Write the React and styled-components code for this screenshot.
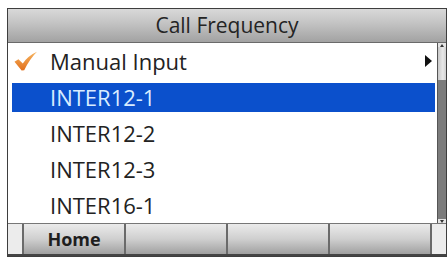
import React from "react";
import styled, { createGlobalStyle } from "styled-components";

const Global = createGlobalStyle`
  html, body { margin: 0; padding: 0; background: #ffffff; }
  body { font-family: "Open Sans", "DejaVu Sans", sans-serif; }
`;

const Screen = styled.div`
  box-sizing: border-box;
  margin: 8px 0 0 7px;
  width: 440px;
  height: 249px;
  border: 1px solid #3e3e3e;
  display: flex;
  flex-direction: column;
  background: #fff;
`;

const Header = styled.div`
  box-sizing: border-box;
  height: 34px;
  flex: none;
  display: flex;
  align-items: center;
  justify-content: center;
  padding-bottom: 1px;
  background: linear-gradient(#d9d9d9 0%, #c2c2c2 45%, #a2a2a2 100%);
  border-bottom: 1px solid #6a6a6a;
  font-size: 21px;
  font-weight: 500;
  color: #242424;
`;

const Body = styled.div`
  flex: none;
  height: 180px;
  display: flex;
`;

const List = styled.div`
  flex: 1;
  display: flex;
  flex-direction: column;
`;

const Row = styled.div`
  box-sizing: border-box;
  height: 36px;
  padding: 4px 2px 3px 4px;
  display: flex;
`;

const Item = styled.div`
  flex: 1;
  display: grid;
  grid-template-columns: 38px 1fr auto;
  align-items: center;
  padding-bottom: 2px;
  background: ${(p) => (p.$selected ? "#0b50cc" : "transparent")};
  color: ${(p) => (p.$selected ? "#d8ecff" : "#222")};
  font-size: 22px;
  font-weight: 500;
  line-height: 1;
`;

const CheckSlot = styled.span`
  display: flex;
  align-items: center;
  padding-left: 2px;
  padding-top: 1px;
`;

const Arrow = styled.span`
  width: 0;
  height: 0;
  margin-right: 3px;
  border-top: 6px solid transparent;
  border-bottom: 6px solid transparent;
  border-left: 7px solid #111;
`;

const Scrollbar = styled.div`
  box-sizing: border-box;
  width: 9px;
  flex: none;
  display: flex;
  flex-direction: column;
  background: #7c7c7c;
  border-left: 1px solid #555;
`;

const ScrollArrow = styled.div`
  height: 4px;
  flex: none;
  display: flex;
  align-items: center;
  justify-content: center;
  background: #e4e4e4;
  &::after {
    content: "";
    border-left: 2px solid transparent;
    border-right: 2px solid transparent;
    ${(p) => (p.$down ? "border-top: 3px solid #333;" : "border-bottom: 3px solid #333;")}
  }
`;

const Thumb = styled.div`
  height: 33px;
  flex: none;
  background: linear-gradient(90deg, #c8c8c8, #e8e8e8 60%, #d0d0d0);
`;

const Track = styled.div`
  flex: 1;
`;

const Footer = styled.div`
  flex: 1;
  display: flex;
  border-top: 1px solid #777;
  border-bottom: 2px solid #444;
`;

const Key = styled.div`
  box-sizing: border-box;
  width: ${(p) => p.$w}px;
  flex: none;
  display: flex;
  align-items: center;
  justify-content: center;
  background: ${(p) =>
    p.$plain ? "#ececec" : "linear-gradient(#ebebeb 0%, #cfcfcf 50%, #a0a0a0 100%)"};
  border-right: ${(p) => (p.$last ? "none" : "2px solid #6a6a6a")};
  font-size: 18px;
  font-weight: 700;
  color: #1e1e1e;
`;

const Check = () => (
  <svg width="24" height="20" viewBox="0 0 24 20">
    <defs>
      <linearGradient id="cg" x1="0" y1="0" x2="0" y2="1">
        <stop offset="0" stopColor="#f6b460" />
        <stop offset="1" stopColor="#e2701c" />
      </linearGradient>
    </defs>
    <path
      d="M0.5 10.8 L4.4 8.2 L8.8 12.4 Q14.5 4.5 23 0.8 Q16 7.6 10.2 19.2 L7.6 19.4 Z"
      fill="url(#cg)"
    />
  </svg>
);

const items = [
  { label: "Manual Input", checked: true, sub: true },
  { label: "INTER12-1", selected: true },
  { label: "INTER12-2" },
  { label: "INTER12-3" },
  { label: "INTER16-1" },
];

const keys = [
  { w: 16, plain: true },
  { w: 102, label: "Home" },
  { w: 102 },
  { w: 102 },
  { w: 102 },
  { w: 14, plain: true, last: true },
];

export default function App() {
  return (
    <>
      <Global />
      <Screen>
        <Header>Call Frequency</Header>
        <Body>
          <List>
            {items.map((it) => (
              <Row key={it.label}>
                <Item $selected={it.selected}>
                  <CheckSlot>{it.checked && <Check />}</CheckSlot>
                  <span>{it.label}</span>
                  {it.sub ? <Arrow /> : <span />}
                </Item>
              </Row>
            ))}
          </List>
          <Scrollbar>
            <ScrollArrow />
            <Thumb />
            <Track />
            <ScrollArrow $down />
          </Scrollbar>
        </Body>
        <Footer>
          {keys.map((k, i) => (
            <Key key={i} $w={k.w} $plain={k.plain} $last={k.last}>
              {k.label}
            </Key>
          ))}
        </Footer>
      </Screen>
    </>
  );
}
